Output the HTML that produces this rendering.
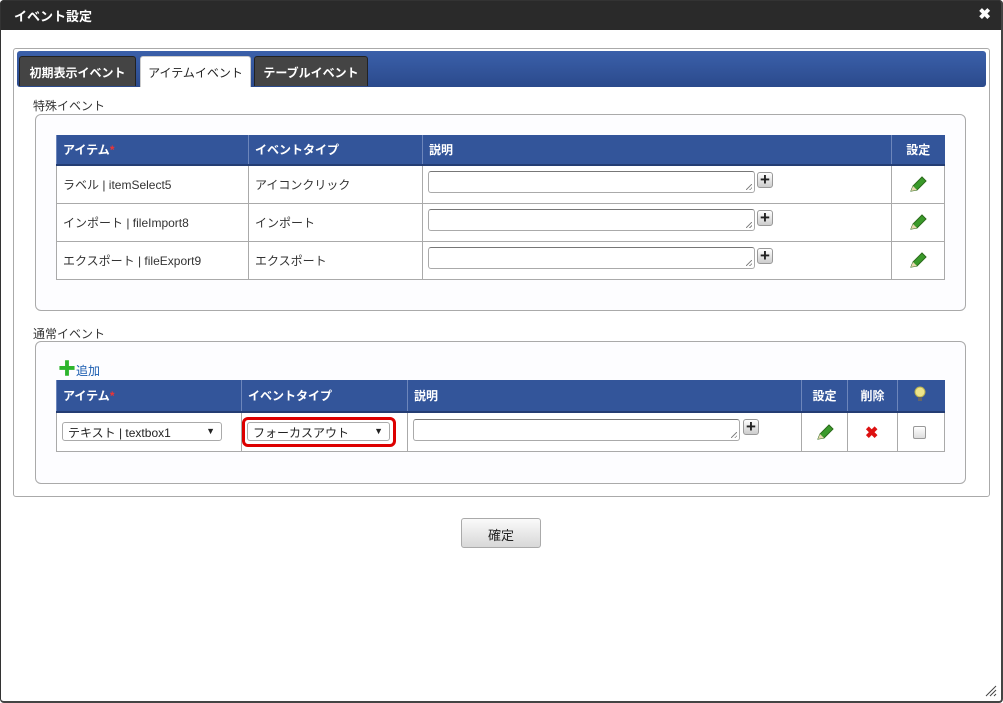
<!DOCTYPE html><html><head><meta charset="utf-8"><style>
*{box-sizing:border-box;margin:0;padding:0}
body{width:1003px;height:703px;position:relative;background:#fff;font-family:"Liberation Sans","Noto Sans CJK JP",sans-serif;font-size:12px;color:#333;overflow:hidden}
.a{position:absolute}
.title{left:0;top:0;width:1003px;height:30px;background:#2a2a2a;color:#fff;font-weight:bold;font-size:13px;padding:6px 0 0 14px;border-radius:4px 4px 0 0}
.frame{left:0;top:0;width:1003px;height:703px;border:1px solid #333;border-right:2px solid #444;border-bottom:2px solid #444;border-radius:4px}
.tab{top:56px;height:30px;background:#444;color:#fff;font-weight:bold;font-size:12px;text-align:center;padding-top:7px;border:1px solid #222;border-bottom:none;border-radius:3px 3px 0 0;white-space:nowrap}
.box{border:1px solid #aaa;border-radius:6px;background:#fdfdff}
table{position:absolute;border-collapse:collapse;table-layout:fixed;background:#fff}
th{background:#33559a;color:#fff;font-weight:bold;text-align:left;padding:0 6px;border-left:1px solid #6d86bb;border-bottom:2px solid #243d73;font-size:12px}
td{border:1px solid #aaa;padding:0 6px;font-size:12px}
.ta{position:absolute;border:1px solid #aaa;border-top-color:#777;border-radius:3px;background:#fff}
.ta:after{content:"";position:absolute;right:2px;bottom:2px;width:6px;height:6px;background:linear-gradient(135deg,transparent 45%,#888 45%,#888 55%,transparent 55%,transparent 75%,#888 75%,#888 85%,transparent 85%)}
.plus{position:absolute;width:16px;height:16px;border:1px solid #999;border-radius:3px;background:linear-gradient(#fff,#ccc);font-weight:bold;font-size:17px;line-height:13px;text-align:center;color:#222}
.sel{position:absolute;border:1px solid #aaa;border-radius:3px;background:#fff;padding:1px 5px;font-size:12px;color:#222}
.sel:after{content:"▼";position:absolute;right:6px;top:3px;font-size:9px}
</style></head><body>
<div class="a title">イベント設定</div>
<div class="a" style="right:12px;top:5px;color:#fff;font-weight:bold;font-size:15px">✖</div>
<div class="a frame"></div>

<div class="a" style="left:13px;top:48px;width:977px;height:449px;border:1px solid #aaa;border-radius:3px"></div>
<div class="a" style="left:17px;top:51px;width:969px;height:36px;background:linear-gradient(#3b60aa,#2b4a8c);border-radius:3px"></div>
<div class="a tab" style="left:19px;width:117px">初期表示イベント</div>
<div class="a tab" style="left:140px;width:111px;background:#fff;color:#222;border-color:#ccc;height:31px;font-weight:normal">アイテムイベント</div>
<div class="a tab" style="left:254px;width:114px">テーブルイベント</div>

<div class="a" style="left:33px;top:97px">特殊イベント</div>
<div class="a box" style="left:35px;top:114px;width:931px;height:197px"></div>
<table style="left:56px;top:135px;width:888px">
<colgroup><col style="width:192px"><col style="width:174px"><col style="width:469px"><col style="width:53px"></colgroup>
<tr style="height:30px"><th>アイテム<span style="color:#e33">*</span></th><th>イベントタイプ</th><th>説明</th><th style="text-align:center">設定</th></tr>
<tr style="height:38px"><td>ラベル | itemSelect5</td><td>アイコンクリック</td><td></td><td></td></tr>
<tr style="height:38px"><td>インポート | fileImport8</td><td>インポート</td><td></td><td></td></tr>
<tr style="height:38px"><td>エクスポート | fileExport9</td><td>エクスポート</td><td></td><td></td></tr>
</table>
<div class="ta" style="left:428px;top:171px;width:327px;height:22px"></div><div class="plus" style="left:757px;top:172px">+</div>
<div class="ta" style="left:428px;top:209px;width:327px;height:22px"></div><div class="plus" style="left:757px;top:210px">+</div>
<div class="ta" style="left:428px;top:247px;width:327px;height:22px"></div><div class="plus" style="left:757px;top:248px">+</div>
<svg class="a" style="left:909px;top:175px" width="18" height="18" viewBox="0 0 18 18"><path d="M2 16 L4 11 L13 2 L17 6 L8 15 Z" fill="#3a9a2a" stroke="#2a6a1a"/><path d="M2 16 L4 11 L8 15 Z" fill="#e8d8b0"/></svg>
<svg class="a" style="left:909px;top:213px" width="18" height="18" viewBox="0 0 18 18"><path d="M2 16 L4 11 L13 2 L17 6 L8 15 Z" fill="#3a9a2a" stroke="#2a6a1a"/><path d="M2 16 L4 11 L8 15 Z" fill="#e8d8b0"/></svg>
<svg class="a" style="left:909px;top:251px" width="18" height="18" viewBox="0 0 18 18"><path d="M2 16 L4 11 L13 2 L17 6 L8 15 Z" fill="#3a9a2a" stroke="#2a6a1a"/><path d="M2 16 L4 11 L8 15 Z" fill="#e8d8b0"/></svg>

<div class="a" style="left:33px;top:325px">通常イベント</div>
<div class="a box" style="left:35px;top:341px;width:931px;height:143px"></div>
<div class="a" style="left:58px;top:362px;color:#1a5cb0"><span style="color:#2db52d;font-weight:bold;font-size:18px;line-height:14px">✚</span>追加</div>
<table style="left:56px;top:380px;width:888px">
<colgroup><col style="width:185px"><col style="width:166px"><col style="width:394px"><col style="width:46px"><col style="width:50px"><col style="width:47px"></colgroup>
<tr style="height:32px"><th>アイテム<span style="color:#e33">*</span></th><th>イベントタイプ</th><th>説明</th><th style="text-align:center">設定</th><th style="text-align:center">削除</th><th></th></tr>
<tr style="height:39px"><td></td><td></td><td></td><td></td><td></td><td></td></tr>
</table>
<svg class="a" style="left:914px;top:386px" width="12" height="18" viewBox="0 0 12 18"><circle cx="6" cy="6" r="5" fill="#eee58a" stroke="#b8b050"/><rect x="4" y="11" width="4" height="4" fill="#666"/></svg>
<div class="sel" style="left:62px;top:422px;width:160px;height:19px">テキスト | textbox1</div>
<div class="a" style="left:242px;top:417px;width:154px;height:30px;border:3px solid #d00;border-radius:6px"></div>
<div class="sel" style="left:247px;top:422px;width:143px;height:19px">フォーカスアウト</div>
<div class="ta" style="left:413px;top:419px;width:327px;height:22px"></div><div class="plus" style="left:743px;top:419px">+</div>
<svg class="a" style="left:816px;top:423px" width="18" height="18" viewBox="0 0 18 18"><path d="M2 16 L4 11 L13 2 L17 6 L8 15 Z" fill="#3a9a2a" stroke="#2a6a1a"/><path d="M2 16 L4 11 L8 15 Z" fill="#e8d8b0"/></svg>
<div class="a" style="left:865px;top:423px;color:#d11;font-weight:bold;font-size:16px">✖</div>
<div class="a" style="left:913px;top:426px;width:13px;height:13px;border:1px solid #999;border-radius:2px;background:linear-gradient(#fff,#ddd)"></div>

<div class="a" style="left:461px;top:518px;width:80px;height:30px;border:1px solid #aaa;border-radius:3px;background:linear-gradient(#fafafa,#d8d8d8);text-align:center;padding-top:6px;font-size:13px;color:#222">確定</div>
<svg class="a" style="left:985px;top:685px" width="12" height="12"><path d="M1 11 L11 1 M5 11 L11 5 M9 11 L11 9" stroke="#444"/></svg>
</body></html>
